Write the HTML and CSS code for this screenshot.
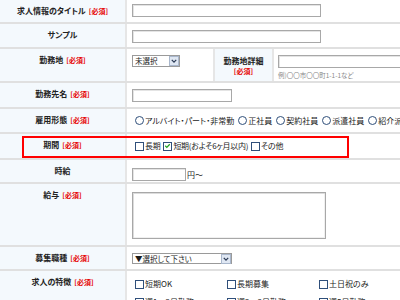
FILE: index.html
```html
<!DOCTYPE html>
<html lang="ja">
<head>
<meta charset="utf-8">
<title>求人情報</title>
<link rel="stylesheet" href="styles.css">
</head>
<body>
<div class="form">
  <div class="row r1">
    <div class="lbl">求人情報のタイトル<span class="req">[必須]</span></div>
    <div class="val"><span class="text w189"></span></div>
  </div>
  <div class="row r2">
    <div class="lbl">サンプル</div>
    <div class="val"><span class="text w189"></span></div>
  </div>
  <div class="row r3">
    <div class="lbl">勤務地<span class="req">[必須]</span></div>
    <div class="val split">
      <div class="cell sel-cell">
        <span class="select w48"><span class="opt">未選択</span><span class="arrow"><svg viewBox="0 0 9 9" width="9" height="9"><path d="M2 3.2 L4.5 5.8 L7 3.2" fill="none" stroke="#2b3a55" stroke-width="1.4"/></svg></span></span>
      </div>
      <div class="sublbl">勤務地詳細<br><span class="req req-b">[必須]</span></div>
      <div class="cell detail-cell">
        <span class="text w160"></span>
        <div class="hint">例)〇〇市〇〇町1-1-1など</div>
      </div>
    </div>
  </div>
  <div class="row r4">
    <div class="lbl">勤務先名<span class="req">[必須]</span></div>
    <div class="val"><span class="text w100"></span></div>
  </div>
  <div class="row r5">
    <div class="lbl">雇用形態<span class="req">[必須]</span></div>
    <div class="val opts opts-wide">
      <span class="item"><span class="rb"></span>アルバイト・パート・非常勤</span>
      <span class="item"><span class="rb"></span>正社員</span>
      <span class="item"><span class="rb"></span>契約社員</span>
      <span class="item"><span class="rb"></span>派遣社員</span>
      <span class="item"><span class="rb"></span>紹介派遣</span>
      <span class="item"><span class="rb"></span>業務委託</span>
    </div>
  </div>
  <div class="row r6">
    <div class="lbl">期間<span class="req">[必須]</span></div>
    <div class="val opts opts-tight">
      <span class="item"><span class="cb"></span>長期</span>
      <span class="item"><span class="cb"><svg viewBox="0 0 9 9" width="9" height="9"><path d="M1.6 4.2 L3.6 6.3 L7.4 2.2" fill="none" stroke="#21a121" stroke-width="1.6"/></svg></span>短期(およそ6ヶ月以内)</span>
      <span class="item"><span class="cb"></span>その他</span>
    </div>
  </div>
  <div class="row r7">
    <div class="lbl">時給</div>
    <div class="val"><span class="text w54"></span><span class="unit">円～</span></div>
  </div>
  <div class="row r8">
    <div class="lbl">給与<span class="req">[必須]</span></div>
    <div class="val"><span class="textarea"></span></div>
  </div>
  <div class="row r9">
    <div class="lbl">募集職種<span class="req">[必須]</span></div>
    <div class="val"><span class="select w100"><span class="opt">▼選択して下さい</span><span class="arrow"><svg viewBox="0 0 9 9" width="9" height="9"><path d="M2 3.2 L4.5 5.8 L7 3.2" fill="none" stroke="#2b3a55" stroke-width="1.4"/></svg></span></span></div>
  </div>
  <div class="row r10">
    <div class="lbl">求人の特徴<span class="req">[必須]</span></div>
    <div class="val feats">
      <span class="item"><span class="cb"></span>短期OK</span>
      <span class="item"><span class="cb"></span>長期募集</span>
      <span class="item"><span class="cb"></span>土日祝のみ</span>
      <span class="item"><span class="cb"></span>週1～2日勤務</span>
      <span class="item"><span class="cb"></span>週2～3日勤務</span>
      <span class="item"><span class="cb"></span>週5日勤務</span>
    </div>
  </div>
  <div class="highlight"></div>
</div>
</body>
</html>
```

FILE: styles.css
```css
* { box-sizing: border-box; }
html, body { margin: 0; padding: 0; background: #fff; overflow: hidden; }
body {
  width: 400px;
  height: 300px;
  font-family: "Noto Sans CJK JP", "Noto Sans", sans-serif;
  font-feature-settings: "palt";
  color: #1a1a1a;
}
.form { position: relative; width: 600px; }
.row { display: flex; border-bottom: 2px solid #e0e0e0; }
.r1 { height: 24px; }
.r2 { height: 25px; }
.r3 { height: 34px; }
.r4 { height: 26px; }
.r5 { height: 25px; }
.r6 { height: 26px; }
.r7 { height: 24px; }
.r8 { height: 63px; }
.r9 { height: 24px; }
.r10 { height: 60px; }

.lbl {
  flex: 0 0 127px;
  background: #f4f9fd;
  border-right: 2px solid #e6e6e6;
  text-align: center;
  font-weight: bold;
  font-size: 8px;
  line-height: 10px;
  padding-top: 6px;
  color: #222;
}
.req { color: #e60000; font-size: 7px; margin-left: 3px; font-weight: bold; }
.req-b { margin-left: 0; }

.val { flex: 1; padding: 6px 0 0 5px; font-size: 8px; line-height: 10px; display: flex; align-items: flex-start; }
.r1 .val { padding-top: 4px; }
.r7 .val { padding-top: 7px; align-items: center; }
.r8 .val { padding-top: 8px; }

.text {
  display: inline-block;
  height: 13px;
  border: 1px solid #a8a8a8;
  box-shadow: inset 1px 1px 0 #e4e4e4;
  background: #fff;
}
.w189 { width: 189px; }
.w160 { width: 160px; }
.w100 { width: 100px; }
.w54 { width: 54px; }
.unit { margin-left: 1px; }

.textarea {
  display: block;
  width: 194px;
  height: 47px;
  border: 1px solid #a8a8a8;
  box-shadow: inset 1px 1px 0 #dcdcdc, inset -1px -1px 0 #f0f0f0;
}

.select {
  display: inline-flex;
  align-items: center;
  height: 12px;
  border: 1px solid #9a9a9a;
  background: #fff;
  font-size: 7.5px;
}
.select.w48 { width: 48px; }
.select.w100 { width: 100px; height: 11px; }
.opt { flex: 1; padding-left: 2px; white-space: nowrap; line-height: 10px; }
.arrow {
  flex: 0 0 10px;
  height: 10px;
  border: 1px solid #a9b7cc;
  background: #dfe7f3;
  display: flex;
  align-items: center;
  justify-content: center;
}
.arrow svg { display: block; width: 8px; height: 8px; }

.split { padding: 0; }
.cell { padding: 6px 0 0 5px; }
.sel-cell { flex: 0 0 86px; }
.sublbl {
  flex: 0 0 61px;
  align-self: stretch;
  background: #f4f9fd;
  border-left: 2px solid #e6e6e6;
  border-right: 2px solid #e6e6e6;
  text-align: center;
  font-weight: bold;
  font-size: 8px;
  line-height: 10px;
  padding-top: 7px;
  color: #222;
}
.detail-cell { padding-left: 4px; }
.hint { font-size: 6.5px; line-height: 8px; color: #8a8a8a; margin-top: 1px; white-space: nowrap; }

.opts { align-items: center; padding: 0 0 0 8px; white-space: nowrap; gap: 5px; }
.opts-wide { gap: 4px; }
.opts-tight { gap: 3px; letter-spacing: -0.3px; }
.item { display: inline-flex; align-items: center; white-space: nowrap; }
.rb, .cb {
  flex: 0 0 9px;
  width: 9px;
  height: 9px;
  border: 1px solid #2f4f7a;
  background: #fff;
  margin-right: 1px;
  display: inline-flex;
  align-items: center;
  justify-content: center;
}
.rb { border-radius: 50%; }
.cb svg { display: block; width: 8px; height: 8px; }

.feats {
  display: grid;
  grid-template-columns: repeat(3, 92px);
  row-gap: 8px;
  align-content: start;
  padding: 8px 0 0 8px;
}

.highlight {
  position: absolute;
  left: 22px;
  top: 136px;
  width: 327px;
  height: 22px;
  border: 2px solid #ff0000;
}
```
